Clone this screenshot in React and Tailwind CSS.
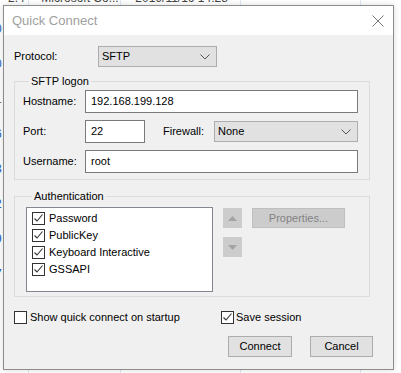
import React from 'react';

const font = { fontFamily: '"Liberation Sans", Arial, sans-serif' };

const Check = ({ checked }) => (
  <span className="flex h-[13px] w-[13px] shrink-0 items-center justify-center border border-[#333333] bg-white">
    {checked && (
      <svg width="11" height="11" viewBox="0 0 11 11">
        <path d="M1.5 5.5 L4 8 L9.5 1.5" fill="none" stroke="#333333" strokeWidth="1.1" />
      </svg>
    )}
  </span>
);

const Chevron = () => (
  <svg width="10" height="6" viewBox="0 0 10 6">
    <path d="M0.5 0.5 L5 5 L9.5 0.5" fill="none" stroke="#555555" strokeWidth="1" />
  </svg>
);

const Select = ({ value, className }) => (
  <div
    className={`flex h-[21px] items-center justify-between border border-[#adadad] bg-[#e1e1e1] pl-[3px] pr-[6px] text-black ${className}`}
  >
    <span>{value}</span>
    <Chevron />
  </div>
);

const Input = ({ value, className }) => (
  <div className={`flex h-[23px] items-center border border-[#7a7a7a] bg-white pl-[5px] text-black ${className}`}>
    {value}
  </div>
);

const bgRows = ['0', '0', '1', '6', '3', '2', '9', '7'];

export default function App() {
  const methods = ['Password', 'PublicKey', 'Keyboard Interactive', 'GSSAPI'];

  return (
    <div className="relative h-[373px] w-[401px] overflow-hidden bg-white" style={font}>
      {/* window behind the dialog */}
      <div className="absolute left-[8px] top-[-11px] whitespace-pre text-[12px] text-[#444444]">
        {'2.4     Microsoft Co...     2019/11/16 14:28'}
      </div>
      <div className="absolute left-[-5px] top-[20px] flex flex-col gap-[17px] text-[12px] text-[#1f5fbf]">
        {bgRows.map((c, i) => (
          <span key={i} className={i === 2 ? 'text-[#9a5a20]' : ''}>{c}</span>
        ))}
      </div>
      <div className="absolute left-[28px] top-0 h-full w-px bg-[#dde8f5]" />
      <div className="absolute left-[120px] top-0 h-full w-px bg-[#dde8f5]" />
      <div className="absolute left-[240px] top-0 h-full w-px bg-[#dde8f5]" />
      <div className="absolute left-[360px] top-0 h-full w-px bg-[#dde8f5]" />

      {/* dialog */}
      <div className="absolute left-[3px] top-[5px] flex h-[365px] w-[391px] flex-col border border-[#8c8c8c] bg-[#f0f0f0] shadow-[0_0_6px_rgba(0,0,0,0.15)]">
        <div className="flex h-[29px] shrink-0 items-center justify-between bg-white pl-[8px] pr-[9px]">
          <span className="text-[13px] text-[#a0a0a0]">Quick Connect</span>
          <svg width="12" height="12" viewBox="0 0 12 12">
            <path d="M0.5 0.5 L11.5 11.5 M11.5 0.5 L0.5 11.5" stroke="#7a7a7a" strokeWidth="1" />
          </svg>
        </div>

        <div className="flex flex-col pl-[10px] pt-[11px] text-[11px] text-black">
          <div className="flex items-center">
            <span className="w-[84px]">Protocol:</span>
            <Select value="SFTP" className="w-[119px]" />
          </div>

          <fieldset className="mt-[7px] w-[356px] border border-[#dcdcdc] pb-[6px] pl-[8px] pr-[11px]">
            <legend className="ml-[6px] px-[2px] leading-[14px]">SFTP logon</legend>
            <div className="flex flex-col gap-[7px] pt-[2px]">
              <div className="flex items-center">
                <span className="w-[62px]">Hostname:</span>
                <Input value="192.168.199.128" className="w-[273px]" />
              </div>
              <div className="flex items-center">
                <span className="w-[62px]">Port:</span>
                <Input value="22" className="w-[60px]" />
                <span className="ml-[18px] w-[51px]">Firewall:</span>
                <Select value="None" className="w-[144px]" />
              </div>
              <div className="flex items-center">
                <span className="w-[62px]">Username:</span>
                <Input value="root" className="w-[273px]" />
              </div>
            </div>
          </fieldset>

          <fieldset className="mt-[9px] w-[356px] border border-[#dcdcdc] pb-[4px] pl-[11px]">
            <legend className="ml-[6px] px-[2px] leading-[14px]">Authentication</legend>
            <div className="flex items-start pt-[4px]">
              <div className="flex h-[85px] w-[187px] flex-col gap-[4px] border border-[#828790] bg-white pl-[5px] pt-[4px]">
                {methods.map((m) => (
                  <div key={m} className="flex h-[13px] items-center gap-[4px]">
                    <Check checked />
                    <span>{m}</span>
                  </div>
                ))}
              </div>
              <div className="ml-[10px] mt-px flex flex-col gap-[9px]">
                <div className="flex h-[20px] w-[19px] items-center justify-center bg-[#cccccc]">
                  <svg width="9" height="5" viewBox="0 0 9 5">
                    <path d="M0 5 L4.5 0 L9 5 Z" fill="#a3a3a3" />
                  </svg>
                </div>
                <div className="flex h-[20px] w-[19px] items-center justify-center bg-[#cccccc]">
                  <svg width="9" height="5" viewBox="0 0 9 5">
                    <path d="M0 0 L4.5 5 L9 0 Z" fill="#a3a3a3" />
                  </svg>
                </div>
              </div>
              <div className="ml-[10px] mt-px flex h-[20px] w-[93px] items-center justify-center border border-[#bfbfbf] bg-[#cccccc] text-[#838383]">
                Properties...
              </div>
            </div>
          </fieldset>

          <div className="mt-[12px] flex items-center">
            <div className="flex w-[207px] items-center gap-[3px]">
              <Check />
              <span>Show quick connect on startup</span>
            </div>
            <div className="flex items-center gap-[2px]">
              <Check checked />
              <span>Save session</span>
            </div>
          </div>

          <div className="mt-[10px] flex justify-end gap-[18px] pr-[20px]">
            <div className="flex h-[21px] w-[64px] items-center justify-center border border-[#adadad] bg-[#e1e1e1]">
              Connect
            </div>
            <div className="flex h-[21px] w-[63px] items-center justify-center border border-[#adadad] bg-[#e1e1e1]">
              Cancel
            </div>
          </div>
        </div>
      </div>
    </div>
  );
}
